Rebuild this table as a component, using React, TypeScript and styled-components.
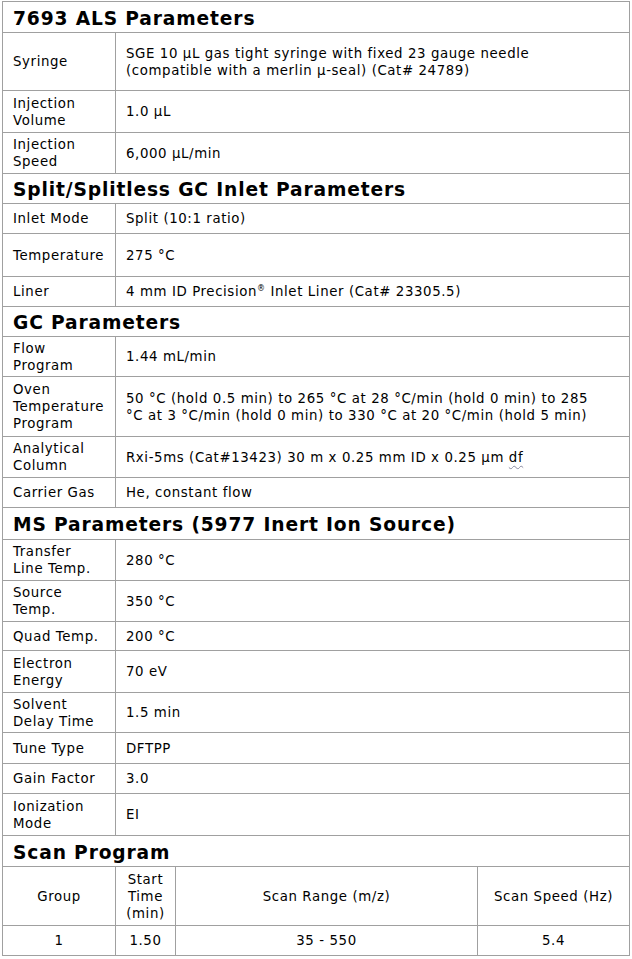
import * as React from 'react';
import styled, { createGlobalStyle } from 'styled-components';

const GlobalStyle = createGlobalStyle`
	html, body {
		margin: 0;
		padding: 0;
		background: #ffffff;
	}
	body {
		font-family: "DejaVu Sans", Verdana, sans-serif;
		color: #000000;
	}
`;

const BORDER = '#a0a0a0';

const Sheet = styled.div`
	width: 628px;
	margin: 1px 0 0 2px;
	box-sizing: border-box;
	border: 1px solid ${BORDER};
	border-bottom: none;
	font-size: 13.33px;
	line-height: 17px;
	/* Verdana runs wider than DejaVu Sans */
	letter-spacing: 0.6px;
`;

const SectionTitle = styled.div<{ h: number }>`
	height: ${p => p.h}px;
	box-sizing: border-box;
	border-bottom: 1px solid ${BORDER};
	padding: 3px 10px 0;
	display: flex;
	align-items: center;
	font-size: 18.67px;
	font-weight: bold;
	line-height: 22px;
	letter-spacing: 0.85px;
`;

const ParamRow = styled.div<{ h: number }>`
	height: ${p => p.h}px;
	box-sizing: border-box;
	border-bottom: 1px solid ${BORDER};
	display: grid;
	grid-template-columns: 113px 1fr;
`;

const Cell = styled.div<{ center?: boolean; divider?: boolean }>`
	box-sizing: border-box;
	padding: 0 10px;
	display: flex;
	flex-direction: column;
	justify-content: center;
	align-items: ${p => (p.center ? 'center' : 'flex-start')};
	text-align: ${p => (p.center ? 'center' : 'left')};
	border-right: ${p => (p.divider ? `1px solid ${BORDER}` : 'none')};
	white-space: nowrap;
`;

const ScanRow = styled.div<{ h: number }>`
	height: ${p => p.h}px;
	box-sizing: border-box;
	border-bottom: 1px solid ${BORDER};
	display: grid;
	grid-template-columns: 113px 60px 302px 1fr;
`;

const ScanCell = styled(Cell)`
	padding: 0 2px;
`;

const Squiggle = styled.span`
	text-decoration: underline wavy #8a8aa0;
	text-decoration-thickness: 1px;
	text-underline-offset: 3px;
`;

const Reg = styled.sup`
	font-size: 8px;
	line-height: 0;
`;

type Param = { label: React.ReactNode; value: React.ReactNode; h: number };

type Section = { title: string; h: number; rows: Param[] };

const sections: Section[] = [
	{
		title: '7693 ALS Parameters',
		h: 31,
		rows: [
			{
				label: 'Syringe',
				value: (
					<>
						SGE 10 µL gas tight syringe with fixed 23 gauge needle
						<br />
						(compatible with a merlin µ-seal) (Cat# 24789)
					</>
				),
				h: 58,
			},
			{ label: <>Injection<br />Volume</>, value: '1.0 µL', h: 42 },
			{ label: <>Injection<br />Speed</>, value: '6,000 µL/min', h: 41 },
		],
	},
	{
		title: 'Split/Splitless GC Inlet Parameters',
		h: 30,
		rows: [
			{ label: 'Inlet Mode', value: 'Split (10:1 ratio)', h: 30 },
			{ label: 'Temperature', value: '275 °C', h: 43 },
			{
				label: 'Liner',
				value: (
					<>
						4 mm ID Precision<Reg>®</Reg> Inlet Liner (Cat# 23305.5)
					</>
				),
				h: 30,
			},
		],
	},
	{
		title: 'GC Parameters',
		h: 30,
		rows: [
			{ label: <>Flow<br />Program</>, value: '1.44 mL/min', h: 40 },
			{
				label: <>Oven<br />Temperature<br />Program</>,
				value: (
					<>
						50 °C (hold 0.5 min) to 265 °C at 28 °C/min (hold 0 min) to 285
						<br />
						°C at 3 °C/min (hold 0 min) to 330 °C at 20 °C/min (hold 5 min)
					</>
				),
				h: 60,
			},
			{
				label: <>Analytical<br />Column</>,
				value: (
					<>
						Rxi-5ms (Cat#13423) 30 m x 0.25 mm ID x 0.25 µm <Squiggle>df</Squiggle>
					</>
				),
				h: 41,
			},
			{ label: 'Carrier Gas', value: 'He, constant flow', h: 30 },
		],
	},
	{
		title: 'MS Parameters (5977 Inert Ion Source)',
		h: 32,
		rows: [
			{ label: <>Transfer<br />Line Temp.</>, value: '280 °C', h: 41 },
			{ label: <>Source<br />Temp.</>, value: '350 °C', h: 41 },
			{ label: 'Quad Temp.', value: '200 °C', h: 29 },
			{ label: <>Electron<br />Energy</>, value: '70 eV', h: 42 },
			{ label: <>Solvent<br />Delay Time</>, value: '1.5 min', h: 40 },
			{ label: 'Tune Type', value: 'DFTPP', h: 31 },
			{ label: 'Gain Factor', value: '3.0', h: 30 },
			{ label: <>Ionization<br />Mode</>, value: 'EI', h: 42 },
		],
	},
];

const scanHeader = ['Group', <>Start<br />Time<br />(min)</>, 'Scan Range (m/z)', 'Scan Speed (Hz)'];
const scanData = ['1', '1.50', '35 - 550', '5.4'];

export default function App() {
	return (
		<>
			<GlobalStyle />
			<Sheet>
				{sections.map(section => (
					<React.Fragment key={section.title}>
						<SectionTitle h={section.h}>{section.title}</SectionTitle>
						{section.rows.map((row, i) => (
							<ParamRow key={i} h={row.h}>
								<Cell divider>
									<div>{row.label}</div>
								</Cell>
								<Cell>
									<div>{row.value}</div>
								</Cell>
							</ParamRow>
						))}
					</React.Fragment>
				))}
				<SectionTitle h={31}>Scan Program</SectionTitle>
				<ScanRow h={59}>
					{scanHeader.map((text, i) => (
						<ScanCell key={i} center divider={i < 3}>
							<div>{text}</div>
						</ScanCell>
					))}
				</ScanRow>
				<ScanRow h={30}>
					{scanData.map((text, i) => (
						<ScanCell key={i} center divider={i < 3}>
							<div>{text}</div>
						</ScanCell>
					))}
				</ScanRow>
			</Sheet>
		</>
	);
}
